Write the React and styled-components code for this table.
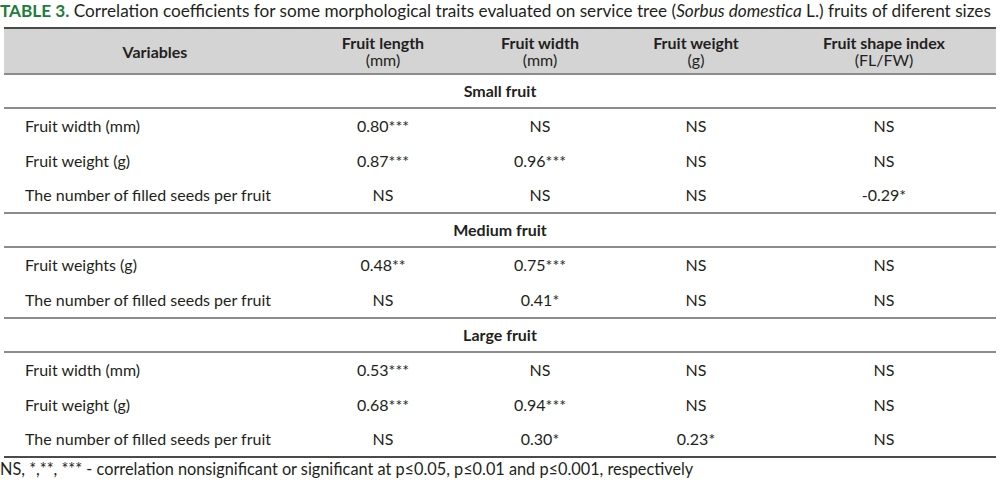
import styled, { createGlobalStyle } from 'styled-components'

const GlobalStyle = createGlobalStyle`
  body {
    margin: 0;
    background: #fff;
    font-family: Lato, "Open Sans", sans-serif;
    color: #231f20;
  }
`

const Page = styled.div`
  width: 1000px;
  height: 485px;
  overflow: hidden;
`

const Caption = styled.div`
  font-size: 17.2px;
  line-height: 22px;
  height: 22px;
  margin-bottom: 5px;
  white-space: nowrap;
`

const Label = styled.span`
  color: #1e7d3a;
  font-weight: 700;
`

const Table = styled.table`
  margin-left: 4px;
  width: 992px;
  border-collapse: collapse;
  table-layout: fixed;
  font-size: 16px;
  line-height: 20px;
  border-top: 2px solid #4a4a4a;
  border-bottom: 2px solid #4a4a4a;
`

const HeadRow = styled.tr`
  background: #d4d4d4;
  border-bottom: 2px solid #8c8c8c;
`

const Th = styled.th`
  height: 44px;
  padding: 0;
  font-weight: 400;
  line-height: 17px;
  text-align: center;
  vertical-align: middle;
`

const ThTitle = styled.div`
  font-weight: 700;
`

const GroupRow = styled.tr`
  border-bottom: 2px solid #8c8c8c;
  border-top: ${p => (p.$first ? 'none' : '2px solid #8c8c8c')};
`

const GroupCell = styled.td`
  height: 32px;
  padding: 0;
  font-weight: 700;
  text-align: center;
`

const Td = styled.td`
  height: 34.4px;
  padding: 0 0 0 ${p => (p.$left ? '21px' : '0')};
  text-align: ${p => (p.$left ? 'left' : 'center')};
  white-space: nowrap;
`

const Note = styled.div`
  font-size: 16.3px;
  line-height: 22px;
  padding-top: 0;
`

const columns = [
  { title: 'Variables', width: 302 },
  { title: 'Fruit length', unit: '(mm)', width: 154 },
  { title: 'Fruit width', unit: '(mm)', width: 160 },
  { title: 'Fruit weight', unit: '(g)', width: 152 },
  { title: 'Fruit shape index', unit: '(FL/FW)', width: 224 },
]

const groups = [
  {
    name: 'Small fruit',
    rows: [
      ['Fruit width (mm)', '0.80***', 'NS', 'NS', 'NS'],
      ['Fruit weight (g)', '0.87***', '0.96***', 'NS', 'NS'],
      ['The number of filled seeds per fruit', 'NS', 'NS', 'NS', '-0.29*'],
    ],
  },
  {
    name: 'Medium fruit',
    rows: [
      ['Fruit weights (g)', '0.48**', '0.75***', 'NS', 'NS'],
      ['The number of filled seeds per fruit', 'NS', '0.41*', 'NS', 'NS'],
    ],
  },
  {
    name: 'Large fruit',
    rows: [
      ['Fruit width (mm)', '0.53***', 'NS', 'NS', 'NS'],
      ['Fruit weight (g)', '0.68***', '0.94***', 'NS', 'NS'],
      ['The number of filled seeds per fruit', 'NS', '0.30*', '0.23*', 'NS'],
    ],
  },
]

export default function App() {
  return (
    <Page>
      <GlobalStyle />
      <Caption>
        <Label>TABLE 3.</Label> Correlation coefficients for some morphological traits evaluated on service
        tree (<i>Sorbus domestica</i> L.) fruits of diferent sizes
      </Caption>
      <Table>
        <colgroup>
          {columns.map(c => (
            <col key={c.title} style={{ width: c.width }} />
          ))}
        </colgroup>
        <thead>
          <HeadRow>
            {columns.map(c => (
              <Th key={c.title}>
                <ThTitle>{c.title}</ThTitle>
                {c.unit && <div>{c.unit}</div>}
              </Th>
            ))}
          </HeadRow>
        </thead>
        {groups.map((g, gi) => (
          <tbody key={g.name}>
            <GroupRow $first={gi === 0}>
              <GroupCell colSpan={5}>{g.name}</GroupCell>
            </GroupRow>
            {g.rows.map((r, ri) => (
              <tr key={ri}>
                {r.map((v, ci) => (
                  <Td key={ci} $left={ci === 0}>{v}</Td>
                ))}
              </tr>
            ))}
          </tbody>
        ))}
      </Table>
      <Note>NS, *,**, *** - correlation nonsignificant or significant at p≤0.05, p≤0.01 and p≤0.001, respectively</Note>
    </Page>
  )
}
